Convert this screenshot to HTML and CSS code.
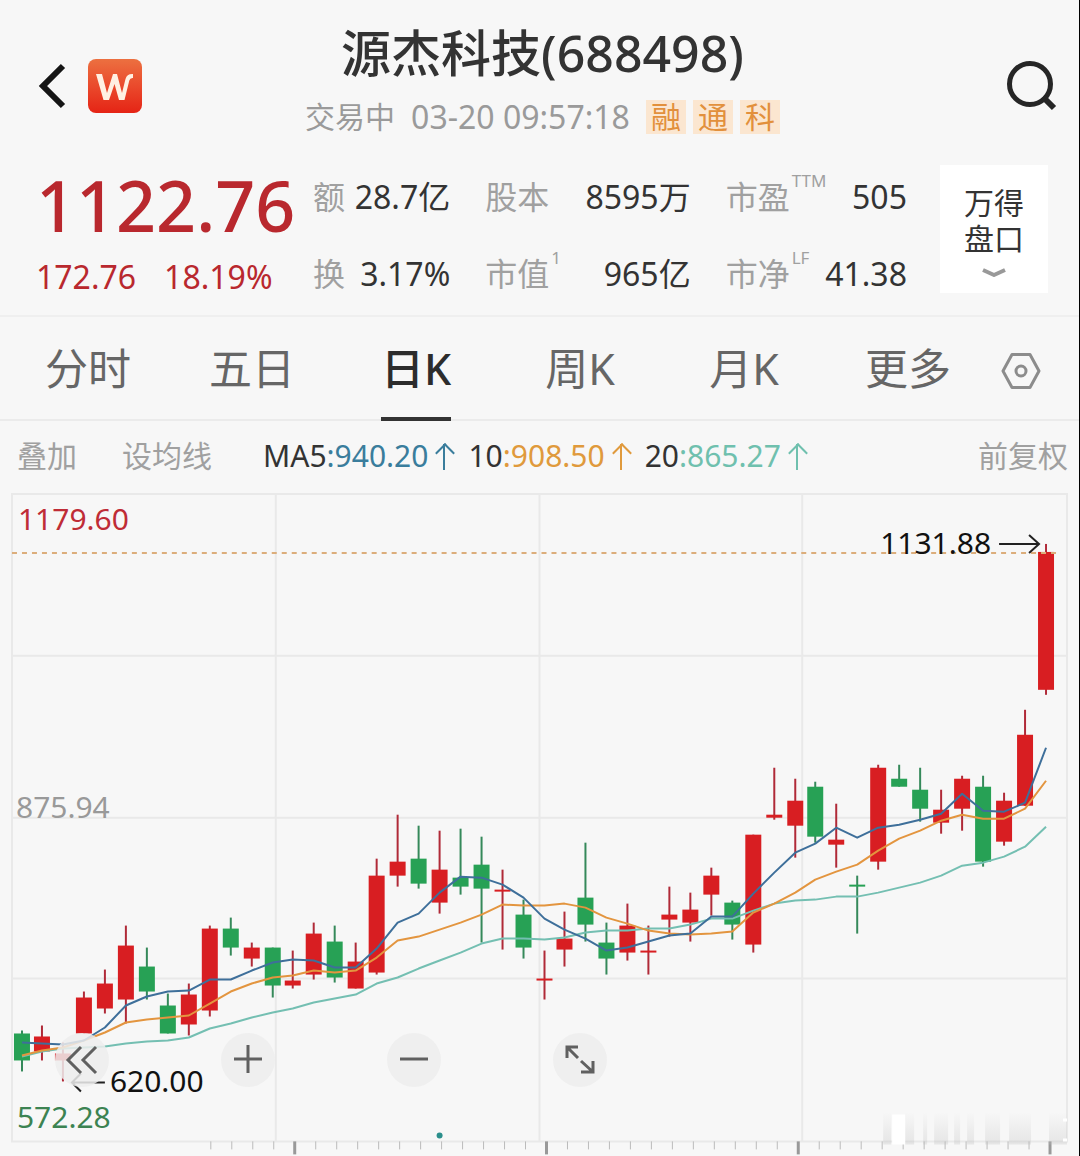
FILE: index.html
```html
<!DOCTYPE html>
<html lang="zh-CN">
<head>
  <meta charset="UTF-8">
  <meta name="viewport" content="width=device-width, initial-scale=1.0">
  <title>源杰科技(688498)</title>
  <link rel="stylesheet" href="styles.css">
</head>
<body>
  <div class="page">

    <!-- Header -->
    <header class="topbar">
      <div class="topbar-left">
        <a href="#" class="back" aria-label="返回">
          <svg width="28" height="48" viewBox="0 0 28 48"><path d="M25 4 5 24 25 44" fill="none" stroke="#151515" stroke-width="6"/></svg>
        </a>
        <a href="#" class="logo" aria-label="Wind">
          <svg width="54" height="54" viewBox="0 0 54 54">
            <defs>
              <linearGradient id="logoBg" x1="0" y1="0" x2="0" y2="1">
                <stop offset="0" stop-color="#ec7040"/>
                <stop offset="0.5" stop-color="#ea4a2c"/>
                <stop offset="1" stop-color="#e52415"/>
              </linearGradient>
            </defs>
            <rect width="54" height="54" rx="8" fill="url(#logoBg)"/>
            <path d="M8 15h6l5 19 6-19h4l5 19 3.500-14q1.500-5.500 7.500-5v4q-3-.3-3.700 2.500l-4.800 19.500h-5.500l-4.500-16-5.500 16h-5.500z" fill="#fff0e2"/>
          </svg>
        </a>
      </div>
      <div class="topbar-title">
        <h1>源杰科技(688498)</h1>
        <div class="status">
          <span>交易中</span>
          <time>03-20 09:57:18</time>
          <span class="tags"><span>融</span><span>通</span><span>科</span></span>
        </div>
      </div>
      <button class="search" aria-label="搜索">
        <svg width="52" height="52" viewBox="0 0 52 52" fill="none" stroke="#262626" stroke-width="5">
          <circle cx="25" cy="24" r="20.500"/>
          <path d="M38 37 49 48" stroke-width="6"/>
        </svg>
      </button>
    </header>

    <!-- Quote -->
    <section class="quote">
      <div class="price">
        <strong>1122.76</strong>
        <div class="change"><span>172.76</span><span>18.19%</span></div>
      </div>
      <dl class="stats">
        <div><dt>额</dt><dd>28.7亿</dd></div>
        <div><dt>股本</dt><dd>8595万</dd></div>
        <div><dt>市盈<sup>TTM</sup></dt><dd>505</dd></div>
        <div><dt>换</dt><dd>3.17%</dd></div>
        <div><dt>市值<sup>1</sup></dt><dd>965亿</dd></div>
        <div><dt>市净<sup>LF</sup></dt><dd>41.38</dd></div>
      </dl>
      <button class="depth">
        <span>万得<br>盘口</span>
        <svg width="26" height="12" viewBox="0 0 26 12"><path d="M2 3 13 8 24 3" fill="none" stroke="#999" stroke-width="4" stroke-linejoin="round"/></svg>
      </button>
    </section>

    <!-- Tabs -->
    <nav class="tabs">
      <a href="#">分时</a>
      <a href="#">五日</a>
      <a href="#" class="active">日K</a>
      <a href="#">周K</a>
      <a href="#">月K</a>
      <a href="#">更多</a>
      <button class="settings" aria-label="设置">
        <svg width="40" height="38" viewBox="0 0 40 38" fill="none" stroke="#8c8c8c" stroke-width="3">
          <path d="M11 2.500h18L38 19l-9 16.500H11L2 19z" stroke-linejoin="round"/>
          <circle cx="20" cy="19" r="5"/>
        </svg>
      </button>
    </nav>

    <!-- Moving averages -->
    <div class="averages">
      <button>叠加</button>
      <button>设均线</button>
      <div class="ma">
        <span>MA5<b class="ma5">:940.20<i class="up"></i></b></span>
        <span>10<b class="ma10">:908.50<i class="up"></i></b></span>
        <span>20<b class="ma20">:865.27<i class="up"></i></b></span>
      </div>
      <button class="adjust">前复权</button>
    </div>

    <!-- Chart -->
    <main class="chart">
      <svg class="kline" viewBox="0 484 1080 672" role="img" aria-label="日K">
        <defs>
          <linearGradient id="fade" x1="0" y1="0" x2="0" y2="1">
            <stop offset="0" stop-color="#bbb" stop-opacity="0"/>
            <stop offset="1" stop-color="#bbb" stop-opacity="0.3"/>
          </linearGradient>
        </defs>
        <path class="grid" d="M12 493H1068V1141H12ZM12 655H1068M12 817H1068M12 978H1068M276 493V1141M540 493V1141M803 493V1141"/>
        <g id="ticks"></g>
        <g id="candles"></g>
        <path class="last" d="M12 552H1062"/>
        <g id="lines"></g>
        <text class="high" x="18" y="529">1179.60</text>
        <text class="mid" x="16" y="817">875.94</text>
        <text class="low" x="17" y="1128">572.28</text>
        <text class="mark" x="881" y="553">1131.88</text>
        <path class="arrow" d="M1000 543H1040M1030 534 1040 543 1030 552"/>
        <text class="mark" x="110" y="1092">620.00</text>
        <path class="arrow" d="M105 1082H72M81 1073 72 1082 81 1091"/>
        <circle cx="440" cy="1135" r="3" fill="#2b8f8c"/>
        <path fill="url(#fade)" d="M884 1112h8v32h-8zM906 1112h9v32h-9zM924 1112h4v32h-4zM935 1112h14v32h-14zM955 1112h6v32h-6zM968 1112h7v32h-7zM986 1112h15v32h-15zM1010 1112h22v32h-22zM1050 1112h18v32h-18z"/>
        <path d="M893 1114h13v30h-13zM1064 1118h4v3h-4zM1064 1138h4v3h-4z" fill="#fff"/>
      </svg>
      <div class="tools">
        <button aria-label="向左"><svg viewBox="0 0 54 54"><path d="M26 14 13 27 26 40M41 14 28 27 41 40"/></svg></button>
        <button aria-label="放大"><svg viewBox="0 0 54 54"><path d="M13 26H41M27 12V40"/></svg></button>
        <button aria-label="缩小"><svg viewBox="0 0 54 54"><path d="M13 26H41"/></svg></button>
        <button aria-label="全屏"><svg viewBox="0 0 54 54"><path d="M25 14H14V25M14 14 25 25M40 28V39H28M28 28 40 39"/></svg></button>
      </div>
    </main>

  </div>
  <script src="chart.js"></script>
</body>
</html>
```
FILE: styles.css
```css
* {
  box-sizing: border-box;
}

body {
  margin: 0;
  background-color: #f7f7f7;
  color: #333;
  font-family: "Noto Sans", "Noto Sans CJK SC", sans-serif;
  font-size: 30px;
  line-height: 36px;
}

button {
  padding: 0;
  border: 0;
  background: none;
  color: inherit;
  font: inherit;
}

a {
  color: inherit;
  text-decoration: none;
}

svg {
  display: block;
}

.page {
  min-height: 100vh;
  border-right: 1px solid #000;
}

/* Header */
.topbar {
  display: grid;
  grid-template-columns: 1fr auto 1fr;
  align-items: center;
  padding: 23px 22px 16px 28px;
}

.topbar-left {
  display: flex;
  align-items: center;
  gap: 22px;
  padding: 14px 0 0 10px;
}

.topbar-title {
  text-align: center;
}

h1 {
  margin: 0;
  font-size: 50px;
  font-weight: 500;
  line-height: 60px;
}

.status {
  display: flex;
  align-items: center;
  justify-content: center;
  gap: 16px;
  margin-top: 16px;
  color: #9a9a9a;
}

.status time {
  font-size: 32px;
}

.tags {
  display: flex;
  gap: 7px;
}

.tags span {
  width: 40px;
  background-color: #fbe6d0;
  color: #e2903c;
  line-height: 34px;
}

.search {
  justify-self: end;
  padding-top: 14px;
}

/* Quote */
.quote {
  display: flex;
  padding: 14px 31px 20px 36px;
  border-bottom: 2px solid #efefef;
}

.price {
  width: 277px;
  color: #b9282e;
}

.price strong {
  display: block;
  font-size: 70px;
  font-weight: 500;
  line-height: 80px;
}

.change {
  display: flex;
  gap: 28px;
  margin-top: 14px;
  font-size: 32px;
}

.stats {
  display: grid;
  flex: 1;
  grid-template-columns: 137fr 205fr 181fr;
  gap: 41px 35px;
  align-content: start;
  margin: 14px 0 0;
}

.stats div {
  display: flex;
  justify-content: space-between;
}

.stats dt {
  color: #a0a0a0;
  font-size: 32px;
  white-space: nowrap;
}

.stats dd {
  margin: 0;
  font-size: 32px;
  white-space: nowrap;
}

sup {
  margin-left: 2px;
  font-size: 17px;
  line-height: 0;
  vertical-align: 22px;
}

.depth {
  display: flex;
  flex-direction: column;
  align-items: center;
  width: 108px;
  height: 128px;
  margin-left: 33px;
  padding-top: 20px;
  background-color: #fff;
}

.depth svg {
  margin-top: 10px;
}

/* Tabs */
.tabs {
  display: grid;
  grid-template-columns: repeat(6, 1fr) 62px;
  height: 104px;
  padding: 4px 27px 0 6px;
  border-bottom: 2px solid #ebebeb;
  color: #666;
  font-size: 43px;
  line-height: 96px;
  text-align: center;
}

.tabs .active {
  justify-self: center;
  border-bottom: 4px solid #333;
  color: #2c2c2c;
  font-weight: 500;
}

.settings {
  display: grid;
  place-items: center;
}

/* Moving averages */
.averages {
  display: flex;
  align-items: center;
  gap: 45px;
  height: 64px;
  padding: 6px 11px 0 17px;
  color: #a0a0a0;
}

.ma {
  display: flex;
  gap: 16px;
  margin-left: 6px;
  color: #333;
}

.ma b {
  font-weight: 400;
}

.ma .ma5 {
  color: #3a7d9c;
}

.ma .ma10 {
  color: #e09a3c;
}

.ma .ma20 {
  color: #6fc0ae;
}

/* arrow after each average */
.up {
  display: inline-block;
  position: relative;
  width: 16px;
  height: 26px;
  margin-left: 8px;
  vertical-align: -3px;
  background: linear-gradient(currentColor, currentColor) center / 2px 100% no-repeat;
}

.up::before {
  content: "";
  position: absolute;
  top: 2px;
  left: 2px;
  width: 12px;
  height: 12px;
  border-top: 2px solid;
  border-left: 2px solid;
  transform: rotate(45deg);
}

.adjust {
  margin-left: auto;
}

/* Chart */
.chart {
  position: relative;
}

.kline {
  width: 100%;
  height: auto;
  fill: none;
}

.kline text {
  font-size: 30px;
}

.grid {
  stroke: #e9e9e9;
  stroke-width: 2;
}

.last {
  stroke: #dcae7c;
  stroke-width: 2;
  stroke-dasharray: 5 5;
}

.tick {
  stroke: #bbb;
  stroke-width: 1;
}

.tick-major {
  stroke: #999;
  stroke-width: 3;
}

.rise {
  fill: #d81e22;
  stroke: #b02a38;
}

.fall {
  fill: #27a155;
  stroke: #35895a;
}

.rise rect,
.fall rect {
  stroke: none;
}

.rise path,
.fall path {
  stroke-width: 2;
}

.line {
  stroke-width: 2;
  stroke-linejoin: round;
}

.line5 {
  stroke: #3e6f9a;
}

.line10 {
  stroke: #e3953f;
}

.line20 {
  stroke: #74bfb2;
}

.high {
  fill: #bf2c36;
}

.mid {
  fill: #999;
}

.low {
  fill: #3c8352;
}

.mark {
  fill: #111;
}

.arrow {
  stroke: #222;
  stroke-width: 2;
}

.tools {
  display: flex;
  gap: 112px;
  position: absolute;
  bottom: 69px;
  left: 55px;
}

.tools button {
  width: 54px;
  height: 54px;
  border-radius: 50%;
  background-color: rgba(237, 237, 237, 0.85);
}

.tools svg {
  fill: none;
  stroke: #606060;
  stroke-width: 3;
}
```
FILE: chart.js
```js
// [direction, high, open/close top, open/close bottom, low] per day
const candles = [
  ['fall', 1030, 1033, 1060, 1071], ['rise', 1025, 1036, 1051, 1060], ['rise', 1042, 1053, 1060, 1081],
  ['rise', 991, 997, 1033, 1033], ['rise', 969, 983, 1008, 1013], ['rise', 925, 945, 999, 1023],
  ['fall', 947, 966, 991, 999], ['fall', 993, 1005, 1033, 1033], ['rise', 983, 994, 1024, 1035],
  ['rise', 925, 928, 1010, 1016], ['fall', 917, 928, 947, 955], ['rise', 942, 947, 958, 966],
  ['fall', 947, 947, 985, 997], ['rise', 950, 980, 985, 988], ['rise', 922, 933, 974, 979],
  ['fall', 925, 941, 977, 982], ['rise', 942, 961, 988, 988], ['rise', 858, 875, 972, 974],
  ['rise', 814, 861, 875, 886], ['fall', 825, 858, 883, 888], ['rise', 830, 869, 902, 913],
  ['fall', 828, 877, 886, 894], ['fall', 836, 864, 888, 942], ['rise', 869, 889, 891, 949],
  ['fall', 899, 914, 947, 958], ['rise', 950, 978, 980, 999], ['rise', 911, 938, 949, 966],
  ['fall', 842, 897, 924, 941], ['fall', 922, 942, 958, 974], ['rise', 903, 925, 952, 960],
  ['rise', 925, 950, 952, 974], ['rise', 886, 914, 919, 936], ['rise', 892, 909, 922, 941],
  ['rise', 867, 875, 894, 915], ['fall', 900, 902, 924, 939], ['rise', 834, 834, 944, 952],
  ['rise', 767, 814, 817, 819], ['rise', 778, 800, 825, 857], ['fall', 781, 786, 836, 842],
  ['rise', 803, 839, 844, 867], ['fall', 875, 884, 886, 933], ['rise', 764, 767, 861, 869],
  ['fall', 764, 778, 786, 786], ['fall', 767, 789, 808, 821], ['rise', 789, 809, 822, 833],
  ['rise', 775, 778, 808, 830], ['fall', 775, 786, 861, 866], ['rise', 792, 800, 841, 845],
  ['rise', 709, 734, 805, 805], ['rise', 543, 551, 689, 694]
];

const averages = {
  line20: [1056, 1051, 1048, 1047, 1046, 1043, 1041, 1040, 1037, 1028, 1023, 1017, 1012, 1008, 1002, 998, 994,
    983, 977, 968, 960, 952, 943, 938, 938, 939, 937, 932, 930, 930, 928, 928, 924, 918, 918, 910, 903, 900,
    899, 896, 896, 892, 887, 882, 875, 865, 862, 856, 846, 826],
  line10: [1055, 1050, 1047, 1040, 1032, 1022, 1019, 1017, 1015, 1003, 991, 983, 977, 975, 970, 972, 970, 957,
    940, 936, 929, 922, 914, 904, 905, 905, 903, 907, 917, 923, 930, 933, 934, 933, 931, 912, 903, 892, 879,
    871, 864, 850, 838, 830, 820, 814, 818, 818, 808, 780],
  line5: [1042, 1043, 1044, 1040, 1027, 1005, 996, 991, 990, 979, 979, 970, 962, 959, 960, 967, 967, 948, 922,
    913, 892, 876, 877, 884, 897, 918, 929, 938, 950, 947, 941, 935, 933, 916, 916, 893, 872, 852, 843, 827,
    837, 827, 824, 819, 813, 793, 810, 811, 802, 747]
};

// x of the centre of day i
const dayX = i => Math.round(21.5 + i * 20.92);

document.getElementById('candles').innerHTML = candles.map(([type, high, top, bottom, low], i) =>
  `<g class="${type}"><path d="M${dayX(i)} ${high}V${low}"/>` +
  `<rect x="${dayX(i) - 8}" y="${top}" width="16" height="${bottom - top}"/></g>`
).join('');

document.getElementById('lines').innerHTML = Object.entries(averages).map(([name, ys]) =>
  `<polyline class="line ${name}" points="${ys.map((y, i) => dayX(i) + ',' + y).join(' ')}"/>`
).join('');

// time axis, every twelfth tick is a long one
let ticks = '';
for (let i = 0; i <= 40; i++) {
  const major = i % 12 === 4;
  ticks += `<path class="${major ? 'tick-major' : 'tick'}" d="M${211 + i * 21} 1141v${major ? 13 : 8}"/>`;
}
document.getElementById('ticks').innerHTML = ticks;
```
